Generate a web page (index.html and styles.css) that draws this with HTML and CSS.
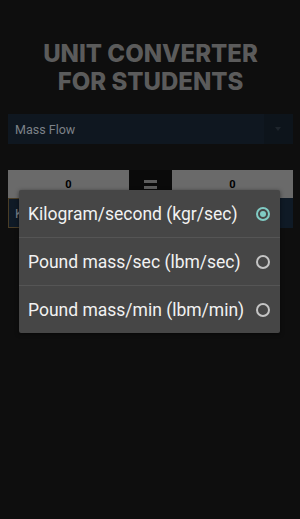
FILE: index.html
```html
<!DOCTYPE html>
<html lang="en">

<head>
    <meta charset="UTF-8">
    <meta name="viewport" content="width=device-width, initial-scale=1.0">
    <title>Unit Converter</title>
    <link rel="stylesheet" href="styles.css">
</head>

<body>
    <div class="app">
        <h1 class="title">UNIT CONVERTER<br>FOR STUDENTS</h1>

        <div class="spinner">
            <span class="spinner-label">Mass Flow</span>
            <span class="spinner-arrow"></span>
        </div>

        <div class="values">
            <div class="value-box">0</div>
            <div class="equals"><span></span><span></span></div>
            <div class="value-box">0</div>
        </div>

        <div class="units">
            <div class="unit-box unit-from">K</div>
            <div class="unit-gap"></div>
            <div class="unit-box"></div>
        </div>
    </div>

    <ul class="menu">
        <li class="menu-item">
            <span>Kilogram/second (kgr/sec)</span>
            <span class="radio checked"></span>
        </li>
        <li class="menu-item">
            <span>Pound mass/sec (lbm/sec)</span>
            <span class="radio"></span>
        </li>
        <li class="menu-item">
            <span>Pound mass/min (lbm/min)</span>
            <span class="radio"></span>
        </li>
    </ul>
</body>

</html>
```

FILE: styles.css
```css
html,
body {
    padding: 0;
    margin: 0;
}

body {
    background: #0e0e0e;
    font-family: Roboto, "Liberation Sans", sans-serif;
    height: 519px;
    overflow: hidden;
}

ul {
    margin: 0;
    padding: 0;
}

li {
    list-style: none;
}

.app {
    padding: 0 7px 0 8px;
}

.title {
    margin: 0;
    padding-top: 40px;
    font-family: Inter, sans-serif;
    font-weight: 800;
    font-size: 24px;
    line-height: 28px;
    text-align: center;
    color: #5b5b5b;
}

.spinner {
    margin-top: 18px;
    height: 30px;
    display: flex;
    align-items: center;
    background: #0f1720;
}

.spinner-label {
    flex: 1;
    padding-left: 7px;
    font-size: 12.5px;
    color: #7d8288;
}

.spinner-arrow {
    width: 29px;
    height: 30px;
    background: #0d141b;
    position: relative;
}

.spinner-arrow::after {
    content: "";
    position: absolute;
    left: 11px;
    top: 13px;
    border-left: 3px solid transparent;
    border-right: 3px solid transparent;
    border-top: 4px solid #1e252c;
}

.values {
    margin-top: 26px;
    display: flex;
    height: 28px;
}

.value-box {
    width: 121px;
    background: #6a6a6a;
    display: flex;
    justify-content: center;
    align-items: center;
    font-size: 11px;
    font-weight: bold;
    color: #000;
}

.equals {
    flex: 1;
    background: #0a0a0a;
    display: flex;
    flex-direction: column;
    align-items: center;
    justify-content: center;
    gap: 3px;
}

.equals span {
    width: 13px;
    height: 3px;
    background: #5d5d5d;
}

.units {
    display: flex;
    height: 30px;
}

.unit-box {
    width: 121px;
    box-sizing: border-box;
    background: #0f1a26;
    color: #7d8288;
    font-size: 13px;
    padding-left: 6px;
    display: flex;
    align-items: center;
}

.unit-from {
    border: 1px solid #4a3d26;
}

.unit-gap {
    flex: 1;
}

.menu {
    position: absolute;
    left: 19px;
    top: 190px;
    width: 261px;
    background: #464646;
    border-radius: 2px;
    box-shadow: 0 1px 4px rgba(0, 0, 0, 0.5);
}

.menu-item {
    height: 47px;
    display: flex;
    align-items: center;
    justify-content: space-between;
    padding: 0 10px 0 9px;
    font-size: 17.5px;
    color: #f2f2f2;
    border-top: 1px solid #555555;
}

.menu-item:first-child {
    border-top: none;
}

.radio {
    flex: none;
    width: 10px;
    height: 10px;
    border: 2px solid #c4c4c4;
    border-radius: 50%;
    position: relative;
}

.radio.checked {
    border-color: #80cbc4;
}

.radio.checked::after {
    content: "";
    position: absolute;
    left: 2px;
    top: 2px;
    width: 6px;
    height: 6px;
    border-radius: 50%;
    background: #80cbc4;
}
```
